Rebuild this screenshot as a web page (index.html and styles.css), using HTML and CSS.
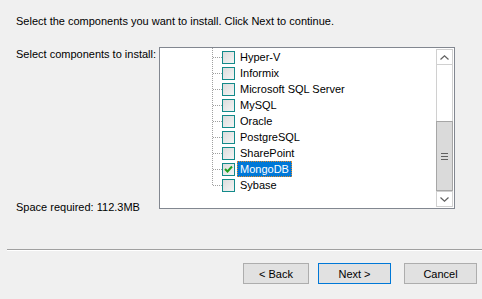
FILE: index.html
```html
<!DOCTYPE html>
<html lang="en">
<head>
    <meta charset="UTF-8">
    <title>Choose Components</title>
    <link rel="stylesheet" href="styles.css">
</head>
<body>
    <div class="wizard">
        <p class="intro">Select the components you want to install. Click Next to continue.</p>

        <div class="components">
            <div class="side">
                <span>Select components to install:</span>
                <span class="space">Space required: 112.3MB</span>
            </div>
            <div class="tree-box">
                <ul class="tree">
                    <li class="row"><span class="dash"></span><span class="check"></span><span class="name">Hyper-V</span></li>
                    <li class="row"><span class="dash"></span><span class="check"></span><span class="name">Informix</span></li>
                    <li class="row"><span class="dash"></span><span class="check"></span><span class="name">Microsoft SQL Server</span></li>
                    <li class="row"><span class="dash"></span><span class="check"></span><span class="name">MySQL</span></li>
                    <li class="row"><span class="dash"></span><span class="check"></span><span class="name">Oracle</span></li>
                    <li class="row"><span class="dash"></span><span class="check"></span><span class="name">PostgreSQL</span></li>
                    <li class="row"><span class="dash"></span><span class="check"></span><span class="name">SharePoint</span></li>
                    <li class="row"><span class="dash"></span><span class="check checked"><svg width="11" height="11" viewBox="0 0 11 11"><path d="M2 5 L4.5 7.5 L9 2.5" fill="none" stroke="#1fa01f" stroke-width="2"/></svg></span><span class="name selected">MongoDB</span></li>
                    <li class="row"><span class="dash"></span><span class="check"></span><span class="name">Sybase</span></li>
                </ul>
                <div class="scrollbar">
                    <div class="arrow"><svg width="9" height="5" viewBox="0 0 9 5"><path d="M0.5 4.5 L4.5 0.8 L8.5 4.5" fill="none" stroke="#606060" stroke-width="1.2"/></svg></div>
                    <div class="track"></div>
                    <div class="thumb"><span class="grip"></span></div>
                    <div class="arrow"><svg width="9" height="5" viewBox="0 0 9 5"><path d="M0.5 0.5 L4.5 4.2 L8.5 0.5" fill="none" stroke="#606060" stroke-width="1.2"/></svg></div>
                </div>
            </div>
        </div>

        <div class="separator"></div>

        <div class="buttons">
            <button class="btn back">&lt; Back</button>
            <button class="btn next">Next &gt;</button>
            <button class="btn cancel">Cancel</button>
        </div>
    </div>
</body>
</html>
```

FILE: styles.css
```css
*{
    box-sizing: border-box;
}
body{
    margin: 0;
    background: #f0f0f0;
    font-family: "Liberation Sans", Arial, sans-serif;
    font-size: 11px;
    color: #000;
}
.wizard{
    display: flex;
    flex-direction: column;
    height: 299px;
}
.intro{
    margin: 0;
    padding: 15px 0 0 16px;
    line-height: 13px;
    white-space: nowrap;
}
.components{
    display: flex;
    margin-top: 19px;
    padding-left: 16px;
}
.side{
    width: 143px;
    height: 162px;
    display: flex;
    flex-direction: column;
    justify-content: space-between;
    line-height: 13px;
    padding-top: 1px;
    white-space: nowrap;
}
.space{
    margin-bottom: -5px;
}
.tree-box{
    width: 296px;
    height: 162px;
    border: 1px solid #828790;
    background: #fff;
    display: flex;
    justify-content: space-between;
}
.tree{
    list-style: none;
    margin: 0;
    padding: 1px 0 0 0;
    flex: 1;
    height: 147px;
    background-image: repeating-linear-gradient(to bottom, #a0a0a0 0 1px, transparent 1px 2px);
    background-size: 1px 138px;
    background-position: 52px 0;
    background-repeat: no-repeat;
}
.row{
    display: flex;
    align-items: center;
    height: 16px;
}
.dash{
    width: 9px;
    height: 1px;
    margin-left: 53px;
    background-image: repeating-linear-gradient(to right, #a0a0a0 0 1px, transparent 1px 2px);
}
.check{
    width: 13px;
    height: 13px;
    border: 1px solid #138a8a;
    background: linear-gradient(135deg, #dcdcdc, #f4f4f4);
    display: flex;
    align-items: center;
    justify-content: center;
}
.name{
    margin-left: 2px;
    padding: 0 2px;
    line-height: 14px;
    border: 1px solid transparent;
}
.selected{
    background: #0078d7;
    color: #fff;
    border: 1px dotted #e08a2c;
}
.scrollbar{
    width: 17px;
    margin: 1px 1px 1px 0;
    display: flex;
    flex-direction: column;
}
.arrow{
    height: 16px;
    border: 1px solid #d0d0d0;
    background: #fff;
    display: flex;
    align-items: center;
    justify-content: center;
}
.track{
    flex: 1;
    border-left: 1px solid #d0d0d0;
    border-right: 1px solid #d0d0d0;
    background: #fff;
}
.thumb{
    height: 70px;
    border: 1px solid #a6a6a6;
    background: #dadada;
    display: flex;
    align-items: center;
    justify-content: center;
}
.grip{
    width: 7px;
    height: 7px;
    background: repeating-linear-gradient(to bottom, #606060 0 1px, transparent 1px 3px);
}
.separator{
    margin: 40px 0 0 7px;
    height: 2px;
    border-top: 1px solid #a0a0a0;
    border-bottom: 1px solid #fff;
}
.buttons{
    display: flex;
    padding: 12px 0 0 243px;
}
.btn{
    height: 21px;
    border: 1px solid #adadad;
    background: #e1e1e1;
    font-family: inherit;
    font-size: 11px;
    padding: 0;
}
.back{
    width: 66px;
}
.next{
    width: 73px;
    margin-left: 9px;
    border-color: #0078d7;
}
.cancel{
    width: 73px;
    margin-left: 13px;
}
```
